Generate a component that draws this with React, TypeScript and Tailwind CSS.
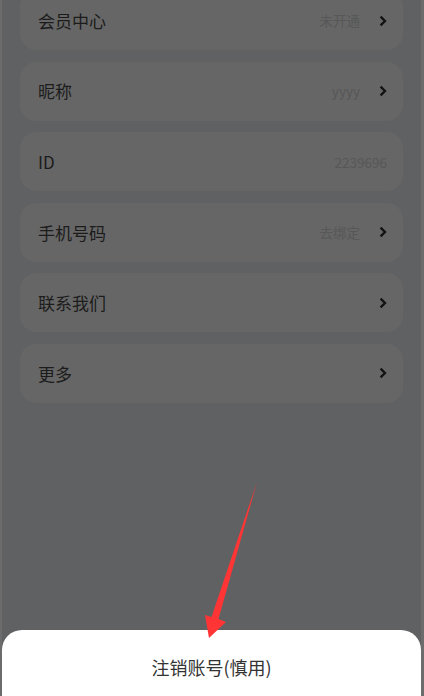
import React from "react";

type Row = { label: string; value?: string; arrow: boolean };

const rows: Row[] = [
  { label: "会员中心", value: "未开通", arrow: true },
  { label: "昵称", value: "yyyy", arrow: true },
  { label: "ID", value: "2239696", arrow: false },
  { label: "手机号码", value: "去绑定", arrow: true },
  { label: "联系我们", arrow: true },
  { label: "更多", arrow: true },
];

const Chevron = () => (
  <svg width="8" height="12" viewBox="0 0 8 12" className="ml-[19px]">
    <path d="M1.6 1.6 L6 6 L1.6 10.4" fill="none" stroke="#121212" strokeWidth="2.3" />
  </svg>
);

const App = () => {
  return (
    <div
      className="relative flex h-[696px] w-[424px] flex-col overflow-hidden border-l-2 border-r-[3px] border-[#6c6c6c] bg-[#606162]"
      style={{ fontFamily: '"Noto Sans CJK SC", "Noto Sans", sans-serif' }}
    >
      <div className="-mt-[9px] flex flex-col gap-[11.6px] px-[18px]">
        {rows.map((r) => (
          <div
            key={r.label}
            className="flex h-[59px] items-center rounded-[16px] bg-[#666666] pl-[18px] pr-[16px]"
          >
            <span className="text-[17px] text-[#1c1c1c]">{r.label}</span>
            <span className="ml-auto text-[13.5px] text-[#575757]">{r.value}</span>
            {r.arrow && <Chevron />}
          </div>
        ))}
      </div>

      <div className="flex-1" />

      <div className="h-[66px] rounded-t-[20px] bg-white pt-[24px] text-center">
        <span className="text-[18px] text-[#333333]">注销账号(慎用)</span>
      </div>

      <svg
        className="pointer-events-none absolute left-0 top-0"
        width="424"
        height="696"
        viewBox="0 0 424 696"
      >
        <polygon
          points="255,482 216.5,619 224,622 207,638 203,615 209.5,617"
          fill="#ff3535"
        />
      </svg>
    </div>
  );
};

export default App;
